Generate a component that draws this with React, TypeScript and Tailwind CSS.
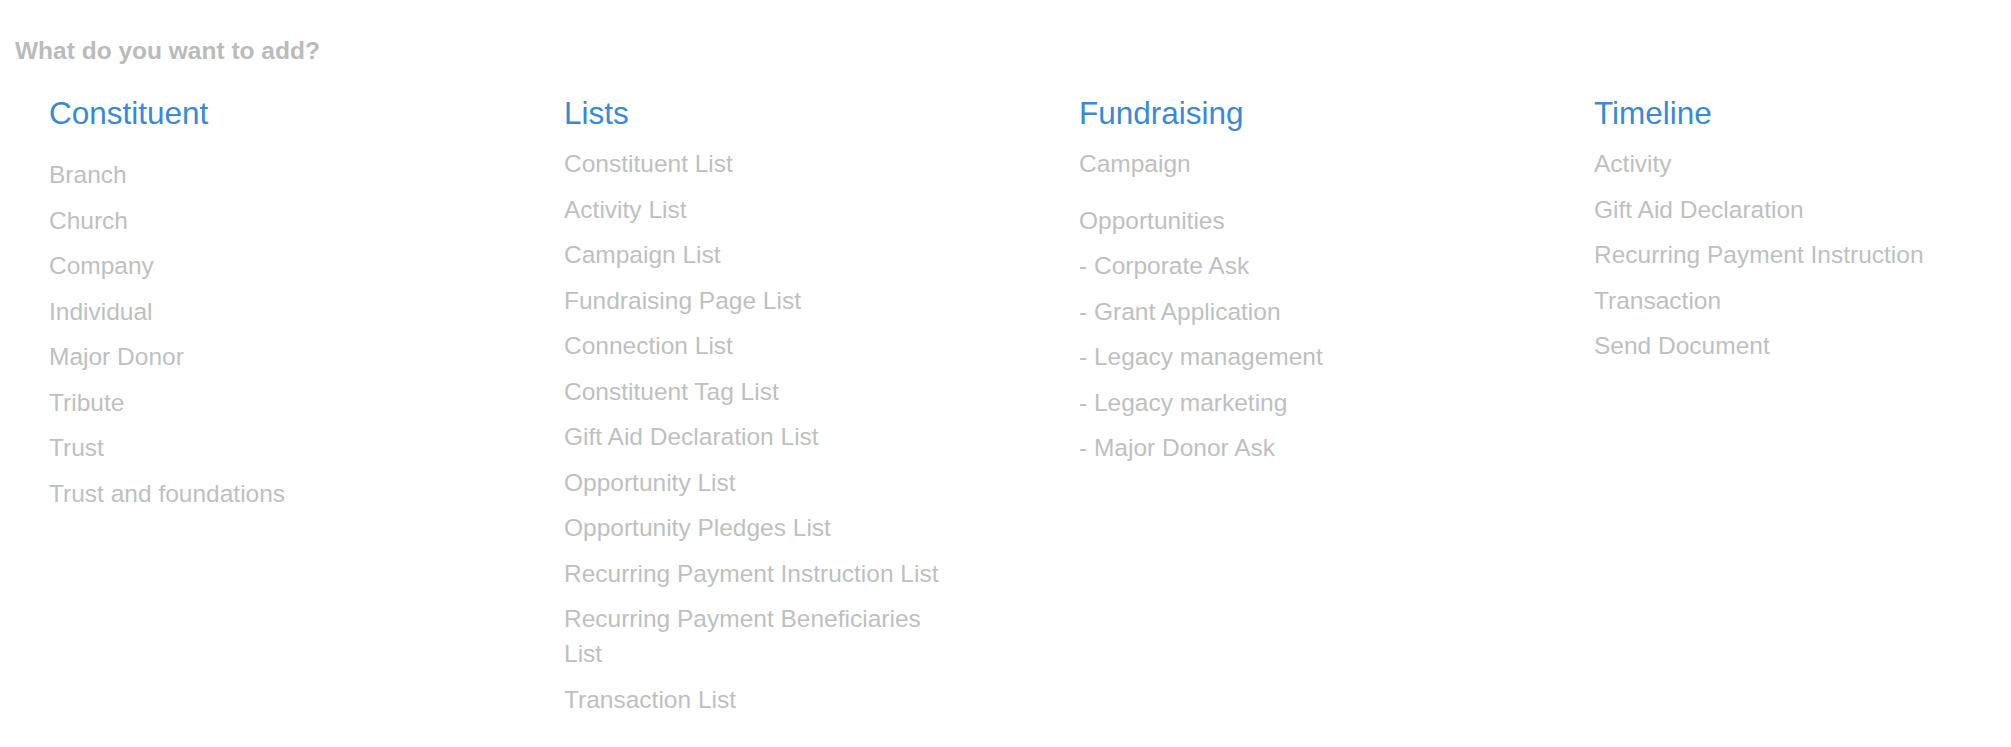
import React from "react";

const Item = ({ children }: { children: React.ReactNode }) => (
  <div className="text-[24.5px] leading-[35px] text-[#bfbfbf]">{children}</div>
);

const Heading = ({ children }: { children: React.ReactNode }) => (
  <div className="text-[31.5px] leading-[35px] text-[#3d88cf] mb-[15px]">{children}</div>
);

const lists = [
  "Constituent List",
  "Activity List",
  "Campaign List",
  "Fundraising Page List",
  "Connection List",
  "Constituent Tag List",
  "Gift Aid Declaration List",
  "Opportunity List",
  "Opportunity Pledges List",
  "Recurring Payment Instruction List",
  "Recurring Payment Beneficiaries List",
  "Transaction List",
];

const constituent = ["Branch", "Church", "Company", "Individual", "Major Donor", "Tribute", "Trust", "Trust and foundations"];
const opps = ["Opportunities", "- Corporate Ask", "- Grant Application", "- Legacy management", "- Legacy marketing", "- Major Donor Ask"];
const timeline = ["Activity", "Gift Aid Declaration", "Recurring Payment Instruction", "Transaction", "Send Document"];

export default function App() {
  return (
    <div
      className="w-[2011px] h-[747px] overflow-hidden bg-white pl-[15px] pt-[33px]"
      style={{ fontFamily: '"Liberation Sans", Arial, Helvetica, sans-serif' }}
    >
      <div className="text-[24.5px] font-bold leading-[35px] text-[#bbbbbb]">What do you want to add?</div>
      <div className="flex pl-[34px] pt-[28px]">
        <div className="w-[515px] shrink-0">
          <Heading>Constituent</Heading>
          <div className="pt-[11px] flex flex-col gap-[10.5px] w-[388px]">
            {constituent.map((t) => (
              <Item key={t}>{t}</Item>
            ))}
          </div>
        </div>
        <div className="w-[515px] shrink-0">
          <Heading>Lists</Heading>
          <div className="flex flex-col gap-[10.5px] w-[388px]">
            {lists.map((t) => (
              <Item key={t}>{t}</Item>
            ))}
          </div>
        </div>
        <div className="w-[515px] shrink-0">
          <Heading>Fundraising</Heading>
          <div className="flex flex-col w-[388px]">
            <Item>Campaign</Item>
            <div className="pt-[21.5px] flex flex-col gap-[10.5px]">
              {opps.map((t) => (
                <Item key={t}>{t}</Item>
              ))}
            </div>
          </div>
        </div>
        <div className="shrink-0">
          <Heading>Timeline</Heading>
          <div className="flex flex-col gap-[10.5px] w-[388px]">
            {timeline.map((t) => (
              <Item key={t}>{t}</Item>
            ))}
          </div>
        </div>
      </div>
    </div>
  );
}
